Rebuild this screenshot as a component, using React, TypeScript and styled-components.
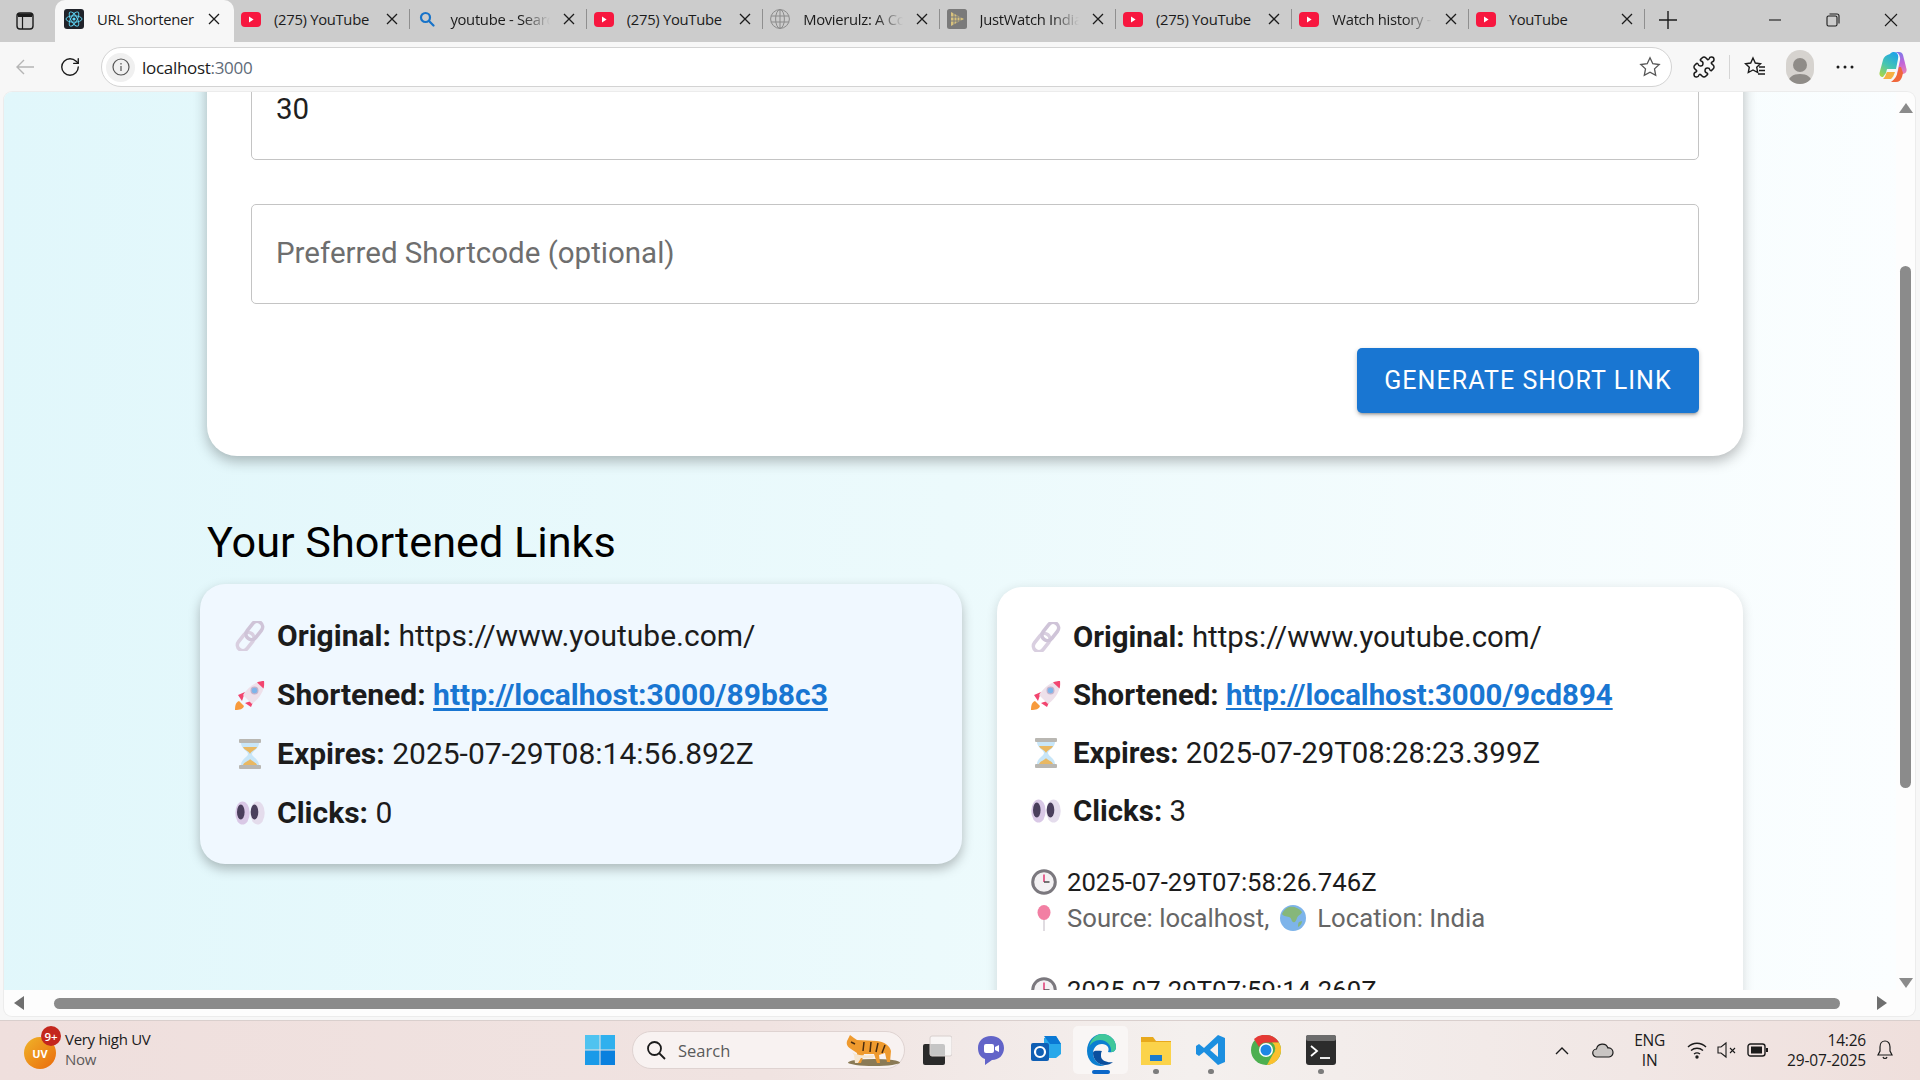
import React from "react";
import styled, { createGlobalStyle } from "styled-components";
import { Puzzle, RotateCw } from "lucide-react";

const GlobalStyle = createGlobalStyle`
  html, body {
    margin: 0;
    padding: 0;
    height: 100%;
    overflow: hidden;
    font-family: "Open Sans", "Noto Sans", sans-serif;
  }
  * { box-sizing: border-box; }
`;

const Screen = styled.div`
  width: 1920px;
  height: 1080px;
  display: flex;
  flex-direction: column;
  background: #f7f7f7;
  overflow: hidden;
`;

/* browser chrome */
const TabStrip = styled.div`
  height: 42px;
  flex: none;
  display: flex;
  background: #cccccc;
`;

const SideToggle = styled.div`
  width: 55px;
  flex: none;
  display: flex;
  align-items: center;
  padding-left: 16px;
`;

const Tab = styled.div<{ $active?: boolean }>`
  width: ${({ $active }) => ($active ? "179px" : "176.4px")};
  flex: none;
  display: flex;
  align-items: center;
  gap: 13px;
  padding: ${({ $active }) => ($active ? "0 14px 4px 9px" : "0 12px 4px 7px")};
  position: relative;
  background: ${({ $active }) => ($active ? "#f7f7f7" : "transparent")};
  border-radius: ${({ $active }) => ($active ? "10px 10px 0 0" : "0")};
  &::after {
    content: "";
    position: absolute;
    right: 0;
    top: 9px;
    height: 20px;
    width: 1px;
    background: ${({ $active }) => ($active ? "transparent" : "#8f8f8f")};
  }
`;

const TabIcon = styled.div`
  width: 20px;
  height: 20px;
  flex: none;
  display: flex;
  align-items: center;
  justify-content: center;
`;

const TabTitle = styled.div<{ $fade?: boolean }>`
  flex: 1;
  min-width: 0;
  white-space: nowrap;
  overflow: hidden;
  font-size: 14.8px;
  letter-spacing: -0.3px;
  color: #1b1b1b;
  ${({ $fade }) =>
    $fade
      ? "-webkit-mask-image: linear-gradient(90deg, #000 72%, transparent 100%);"
      : ""}
`;

const TabClose = styled.svg`
  width: 12px;
  height: 12px;
  flex: none;
`;

const NewTab = styled.svg`
  width: 18px;
  height: 18px;
  margin: 11px 0 0 14px;
`;

const WindowButtons = styled.div`
  margin-left: auto;
  display: flex;
  align-items: center;
  height: 40px;
`;

const WindowButton = styled.div`
  width: 58px;
  height: 40px;
  display: flex;
  align-items: center;
  justify-content: center;
`;

const Toolbar = styled.div`
  height: 50px;
  flex: none;
  display: flex;
  align-items: center;
  background: #f7f7f7;
  padding-left: 14px;
`;

const NavButton = styled.div`
  width: 22px;
  height: 22px;
  display: flex;
  align-items: center;
  justify-content: center;
`;

const NavGroup = styled.div`
  display: flex;
  gap: 23px;
  width: 87px;
  flex: none;
`;

const AddressBar = styled.div`
  width: 1571px;
  height: 40px;
  flex: none;
  display: flex;
  align-items: center;
  background: #fff;
  border: 1px solid #d3d3d3;
  border-radius: 20px;
  padding: 0 10px 0 4px;
`;

const InfoBadge = styled.div`
  width: 29px;
  height: 29px;
  border-radius: 50%;
  background: #f0f0f0;
  display: flex;
  align-items: center;
  justify-content: center;
  margin-right: 7px;
`;

const UrlText = styled.div`
  flex: 1;
  font-size: 17px;
  letter-spacing: -0.3px;
  color: #1b1b1b;
  span { color: #5f6b78; }
`;

const ToolGroup = styled.div`
  display: flex;
  align-items: center;
  padding-left: 11px;
`;

const ToolSlot = styled.div<{ $w: number }>`
  width: ${({ $w }) => $w}px;
  flex: none;
  display: flex;
  align-items: center;
  justify-content: center;
`;

const ToolDivider = styled.div`
  width: 1px;
  height: 24px;
  background: #d5d5d5;
`;

const Avatar = styled.div`
  width: 28px;
  height: 34px;
  border-radius: 14px;
  background: #d6d3cf;
  display: flex;
  align-items: flex-end;
  justify-content: center;
  overflow: hidden;
`;

/* page */
const Viewport = styled.div`
  flex: 1;
  min-height: 0;
  display: flex;
  flex-direction: column;
  background: #fdfdfd;
  margin: 0 5px 0 4px;
  border-radius: 8px;
  box-shadow: 0 0 0 1px #ececec;
  overflow: hidden;
`;

const PageRow = styled.div`
  flex: 1;
  min-height: 0;
  display: flex;
`;

const PageClip = styled.div`
  flex: 1;
  min-width: 0;
  overflow: hidden;
  background: linear-gradient(92deg, #e1f7fb 0%, #ecfafc 50%, #fbfeff 100%);
`;

const Page = styled.main`
  padding-left: 203px;
  margin-top: -96px;
  color: #000;
  font-family: Roboto, "Liberation Sans", sans-serif;
`;

const FormCard = styled.section`
  width: 1536px;
  background: #fff;
  border-radius: 30px;
  padding: 64px 44px 43px;
  box-shadow: 0 5px 14px rgba(0, 0, 0, 0.28);
  display: flex;
  flex-direction: column;
`;

const Field = styled.div<{ $value?: boolean }>`
  height: 100px;
  border: 1px solid #c4c4c4;
  border-radius: 5px;
  display: flex;
  align-items: center;
  padding: 0 24px 3px;
  font-size: 29.5px;
  margin-bottom: 44px;
  color: ${({ $value }) => ($value ? "#1f1f1f" : "#6e6e6e")};
`;

const SubmitRow = styled.div`
  display: flex;
  justify-content: flex-end;
`;

const SubmitButton = styled.button`
  width: 342px;
  height: 65px;
  border: 0;
  border-radius: 5px;
  background: #1976d2;
  color: #fff;
  font-family: inherit;
  font-size: 25px;
  font-weight: 400;
  letter-spacing: 1.05px;
  box-shadow: 0 3px 3px -2px rgba(0, 0, 0, 0.3), 0 2px 5px rgba(0, 0, 0, 0.22);
`;

const Heading = styled.h2`
  margin: 44px 0 0 0;
  height: 84px;
  display: flex;
  align-items: center;
  font-size: 43.2px;
  font-weight: 400;
`;

const CardGrid = styled.div`
  display: flex;
  align-items: flex-start;
  gap: 35px;
  margin-left: -7px;
`;

const LinkCard = styled.article<{ $tint?: boolean }>`
  flex: none;
  width: ${({ $tint }) => ($tint ? "762px" : "746px")};
  margin-top: ${({ $tint }) => ($tint ? "0" : "3px")};
  background: ${({ $tint }) => ($tint ? "#f0f8ff" : "#fff")};
  border-radius: 25px;
  font-size: ${({ $tint }) => ($tint ? "30px" : "29.4px")};
  padding: ${({ $tint }) => ($tint ? "22px 35px 22px" : "21px 34px 20px")};
  box-shadow: ${({ $tint }) =>
    $tint ? "0 5px 12px rgba(0, 0, 0, 0.26)" : "0 3px 12px rgba(0, 0, 0, 0.14)"};
`;

const InfoRow = styled.div<{ $tight?: boolean }>`
  height: ${({ $tight }) => ($tight ? "58px" : "59px")};
  display: flex;
  align-items: center;
  color: #1c1c1c;
  white-space: pre;
  b { font-weight: 700; }
`;

const RowIcon = styled.svg`
  width: 30px;
  height: 30px;
  flex: none;
  margin-right: 12px;
`;

const ShortLink = styled.a`
  color: #1976d2;
  font-weight: 700;
  text-decoration: underline;
  text-underline-offset: 3px;
`;

const VisitList = styled.div`
  margin-top: 24px;
  display: flex;
  flex-direction: column;
  gap: 36px;
`;

const Visit = styled.div`
  display: flex;
  flex-direction: column;
`;

const VisitLine = styled.div<{ $muted?: boolean }>`
  height: 36px;
  display: flex;
  align-items: center;
  font-size: 25.7px;
  white-space: pre;
  color: ${({ $muted }) => ($muted ? "#666" : "#1c1c1c")};
`;

const VisitIcon = styled.svg<{ $inline?: boolean }>`
  width: 26px;
  height: 26px;
  flex: none;
  margin: ${({ $inline }) => ($inline ? "0 11px" : "0 10px 0 0")};
`;

const VTrack = styled.div`
  width: 19px;
  flex: none;
  display: flex;
  flex-direction: column;
  align-items: center;
  padding: 11px 0 2px;
`;

const VThumb = styled.div`
  width: 11px;
  height: 522px;
  border-radius: 6px;
  background: #8b8b8b;
  margin: 153px 0 auto;
`;

const HTrack = styled.div`
  height: 26px;
  flex: none;
  display: flex;
  align-items: center;
  padding: 0 28px 0 10px;
`;

const HThumb = styled.div`
  flex: 1;
  height: 11px;
  margin: 0 37px 0 30px;
  border-radius: 6px;
  background: #8b8b8b;
`;

/* taskbar */
const Taskbar = styled.footer`
  height: 60px;
  flex: none;
  margin-top: 4px;
  border-top: 1px solid #d9cfcd;
  padding-bottom: 1px;
  background: linear-gradient(90deg, #efdfdd 0%, #f0e3e1 40%, #f4f0ee 62%, #f1e7e5 85%, #efdfdc 100%);
  display: flex;
  align-items: center;
`;

const Widget = styled.div`
  width: 585px;
  flex: none;
  display: flex;
  align-items: center;
  padding-left: 24px;
`;

const UvIcon = styled.div`
  width: 32px;
  height: 32px;
  margin-top: 6px;
  border-radius: 50%;
  background: linear-gradient(135deg, #f0b429, #ea6a0c);
  color: #fff;
  font: 700 11px "Open Sans", sans-serif;
  display: flex;
  align-items: center;
  justify-content: center;
  position: relative;
`;

const CountBadge = styled.div`
  position: absolute;
  top: -11px;
  right: -5px;
  width: 20px;
  height: 20px;
  border-radius: 50%;
  background: #c4261d;
  font-size: 11.5px;
  font-weight: 600;
  display: flex;
  align-items: center;
  justify-content: center;
`;

const WidgetText = styled.div`
  margin: 0 0 2px 9px;
  font-size: 15px;
  letter-spacing: -0.3px;
  line-height: 20px;
  color: #1b1b1b;
  small { display: block; font-size: 15px; color: #5d5a5a; }
`;

const WinLogo = styled.svg`
  width: 30px;
  height: 30px;
  flex: none;
`;

const SearchBox = styled.div`
  width: 273px;
  height: 38px;
  flex: none;
  margin-left: 17px;
  border-radius: 19px;
  background: #f8f2f1;
  border: 1px solid #dfd3d1;
  display: flex;
  align-items: center;
  padding: 0 4px 0 13px;
  font-size: 16.5px;
  color: #5a5a5a;
  gap: 12px;
  svg:last-child { margin-left: auto; }
`;

const AppIcons = styled.div`
  display: flex;
  margin-left: 3px;
`;

const AppSlot = styled.div<{ $active?: boolean; $dot?: boolean }>`
  width: 55px;
  height: 48px;
  display: flex;
  align-items: center;
  justify-content: center;
  position: relative;
  border-radius: 5px;
  background: ${({ $active }) => ($active ? "#f9f6f5" : "transparent")};
  &::after {
    content: "";
    display: ${({ $active, $dot }) => ($active || $dot ? "block" : "none")};
    position: absolute;
    bottom: 0;
    left: 50%;
    transform: translateX(-50%);
    width: ${({ $active }) => ($active ? "18px" : "6px")};
    height: ${({ $active }) => ($active ? "4px" : "5px")};
    border-radius: 3px;
    background: ${({ $active }) => ($active ? "#0a66c8" : "#7c7c7c")};
  }
`;

const Tray = styled.div`
  margin-left: auto;
  display: flex;
  align-items: center;
  padding-right: 26px;
`;

const TrayIcon = styled.svg<{ $gap?: number }>`
  flex: none;
  margin-left: ${({ $gap }) => $gap ?? 0}px;
`;

const TrayLang = styled.div`
  margin: 0 22px 0 20px;
  font-size: 15.5px;
  line-height: 20px;
  text-align: center;
  letter-spacing: -0.2px;
  color: #1b1b1b;
`;

const TrayClock = styled.div`
  margin: 0 10px 0 19px;
  font-size: 15.5px;
  line-height: 20px;
  text-align: right;
  letter-spacing: -0.2px;
  color: #1b1b1b;
`;

/* icons */
const YouTubeIcon = () => (
  <svg width="20" height="15" viewBox="0 0 20 15">
    <rect width="20" height="15" rx="4" fill="#f7173f" />
    <path d="M8 4.6l4.6 2.9L8 10.4z" fill="#fff" />
  </svg>
);

const ReactIcon = () => (
  <svg width="20" height="20" viewBox="0 0 20 20">
    <rect width="20" height="20" rx="3" fill="#20232a" />
    <g fill="none" stroke="#61dafb" strokeWidth="0.9">
      <ellipse cx="10" cy="10" rx="8" ry="3.2" />
      <ellipse cx="10" cy="10" rx="8" ry="3.2" transform="rotate(60 10 10)" />
      <ellipse cx="10" cy="10" rx="8" ry="3.2" transform="rotate(120 10 10)" />
    </g>
    <circle cx="10" cy="10" r="1.6" fill="#61dafb" />
  </svg>
);

const SearchTabIcon = () => (
  <svg width="16" height="16" viewBox="0 0 16 16" fill="none" stroke="#1773c9" strokeWidth="2.2">
    <circle cx="6.5" cy="6.5" r="4.5" />
    <path d="M10 10l4.5 4.5" strokeLinecap="round" />
  </svg>
);

const GlobeIcon = () => (
  <svg width="20" height="20" viewBox="0 0 20 20" fill="none" stroke="#8a8a8a" strokeWidth="1">
    <circle cx="10" cy="10" r="9.4" />
    <ellipse cx="10" cy="10" rx="4.4" ry="9.4" />
    <path d="M1 7h18M1 13h18M10 .6v18.8" />
  </svg>
);

const JustWatchIcon = () => (
  <svg width="20" height="20" viewBox="0 0 20 20">
    <rect width="20" height="20" rx="2.5" fill="#7a7a7a" />
    <path d="M4 3l13 7-13 7z" fill="#d8c27d" />
    <path d="M7 3v14M10 3v14M13 3v14M4 8h12M4 12h12" stroke="#7a7a7a" strokeWidth="1" />
  </svg>
);

const CloseGlyph = () => (
  <TabClose viewBox="0 0 12 12" fill="none" stroke="#1b1b1b" strokeWidth="1.3">
    <path d="M1 1l10 10M11 1L1 11" />
  </TabClose>
);

const LinkEmoji = () => (
  <RowIcon viewBox="0 0 30 30" fill="none">
    <g transform="rotate(-52 15 15)" strokeWidth="3.6" stroke="#d9cfe0">
      <rect x="-2" y="9.500" width="20" height="11" rx="5.500" />
      <rect x="12" y="9.500" width="20" height="11" rx="5.500" stroke="#cfc4d8" />
    </g>
  </RowIcon>
);

const RocketEmoji = () => (
  <RowIcon viewBox="0 0 30 30">
    <path d="M0 30c0-5 1-8 4-9l5 5c-1 3-4 4-9 4z" fill="#f79a3c" />
    <path d="M3 15l7-3-3 9zM16 27l3-7-9 3z" fill="#f2456f" />
    <path d="M29 1c1 9-4 17-12 23l-9-9C13 7 21 1 29 1z" fill="#eee0ea" />
    <path d="M29 1c.3 2.500.2 5-.5 7.500L22 2.500C24 1.500 27 1 29 1z" fill="#f2456f" />
    <circle cx="19.500" cy="10.500" r="3.400" fill="#7fb5ea" stroke="#c4b3cc" strokeWidth="1.200" />
  </RowIcon>
);

const HourglassEmoji = () => (
  <RowIcon viewBox="0 0 30 30">
    <rect x="4" y="0" width="22" height="4" rx="1" fill="#b9b7b2" />
    <rect x="4" y="26" width="22" height="4" rx="1" fill="#b9b7b2" />
    <path d="M6 4h18c0 6-7 8-7 11s7 5 7 11H6c0-6 7-8 7-11S6 10 6 4z" fill="#c8e6f8" />
    <path d="M8 8h14c-1 3-6 4-7 7-1-3-6-4-7-7z" fill="#e9b862" />
    <path d="M8 26c1-3 6-4 7-6 1 2 6 3 7 6z" fill="#e9b862" />
  </RowIcon>
);

const EyesEmoji = () => (
  <RowIcon viewBox="0 0 30 30">
    <ellipse cx="7.500" cy="15" rx="7.200" ry="11.500" fill="#d9c8e6" />
    <ellipse cx="22.500" cy="15" rx="7.200" ry="11.500" fill="#e4dcec" />
    <ellipse cx="5.800" cy="14" rx="3.800" ry="7.500" fill="#4a3f5c" />
    <ellipse cx="19.500" cy="14" rx="3.800" ry="7.500" fill="#4a3f5c" />
  </RowIcon>
);

const ClockEmoji = () => (
  <VisitIcon viewBox="0 0 26 26">
    <circle cx="13" cy="13" r="11.300" fill="#f3f1f3" stroke="#7b787e" strokeWidth="3" />
    <path d="M13 5.500V13" stroke="#e0447a" strokeWidth="1.600" />
    <path d="M13 13h5.500" stroke="#555" strokeWidth="1.600" />
  </VisitIcon>
);

const PinEmoji = () => (
  <VisitIcon viewBox="0 0 26 26">
    <path d="M13 13v13" stroke="#d9d4da" strokeWidth="1.600" />
    <ellipse cx="13" cy="7.500" rx="6.500" ry="7.500" fill="#f27fa3" />
  </VisitIcon>
);

const EarthEmoji = () => (
  <VisitIcon $inline viewBox="0 0 26 26">
    <circle cx="13" cy="13" r="13" fill="#7db4ea" />
    <path d="M9 2c5-1 10 1 13 5-1 3-4 3-5 6s-2 5-4 4-1-4-4-5-6-1-7-3c1-3 4-6 7-7zM19 17l3-1c0 3-2 5-4 6 0-2 0-4 1-5z" fill="#86b77a" />
  </VisitIcon>
);

const tabs: { title: string; icon: React.ReactNode; fade?: boolean }[] = [
  { title: "(275) YouTube", icon: <YouTubeIcon /> },
  { title: "youtube - Search", icon: <SearchTabIcon />, fade: true },
  { title: "(275) YouTube", icon: <YouTubeIcon /> },
  { title: "Movierulz: A Complete", icon: <GlobeIcon />, fade: true },
  { title: "JustWatch India", icon: <JustWatchIcon />, fade: true },
  { title: "(275) YouTube", icon: <YouTubeIcon /> },
  { title: "Watch history - YouTube", icon: <YouTubeIcon />, fade: true },
  { title: "YouTube", icon: <YouTubeIcon /> },
];

const visits = ["2025-07-29T07:58:26.746Z", "2025-07-29T07:59:14.260Z"];

export default function App() {
  return (
    <Screen>
      <GlobalStyle />
      <TabStrip>
        <SideToggle>
          <svg width="18" height="18" viewBox="0 0 18 18" fill="none">
            <rect x="1" y="1" width="16" height="16" rx="3" stroke="#1b1b1b" strokeWidth="1.4" />
            <path d="M2 1.500h14V5H2z" fill="#1b1b1b" />
            <path d="M6.500 5v12" stroke="#1b1b1b" strokeWidth="1.200" />
          </svg>
        </SideToggle>
        <Tab $active>
          <TabIcon><ReactIcon /></TabIcon>
          <TabTitle>URL Shortener</TabTitle>
          <CloseGlyph />
        </Tab>
        {tabs.map((t, i) => (
          <Tab key={i}>
            <TabIcon>{t.icon}</TabIcon>
            <TabTitle $fade={t.fade}>{t.title}</TabTitle>
            <CloseGlyph />
          </Tab>
        ))}
        <NewTab viewBox="0 0 18 18" stroke="#1b1b1b" strokeWidth="1.4">
          <path d="M9 0v18M0 9h18" />
        </NewTab>
        <WindowButtons>
          <WindowButton>
            <svg width="14" height="14" viewBox="0 0 14 14" stroke="#1b1b1b" strokeWidth="1.100"><path d="M1 7h12" /></svg>
          </WindowButton>
          <WindowButton>
            <svg width="14" height="14" viewBox="0 0 14 14" fill="none" stroke="#1b1b1b" strokeWidth="1.100">
              <rect x="1" y="3" width="10" height="10" rx="1.500" />
              <path d="M3.500 1H11a2 2 0 0 1 2 2v7.500" />
            </svg>
          </WindowButton>
          <WindowButton>
            <svg width="14" height="14" viewBox="0 0 14 14" stroke="#1b1b1b" strokeWidth="1.100"><path d="M1 1l12 12M13 1L1 13" /></svg>
          </WindowButton>
        </WindowButtons>
      </TabStrip>

      <Toolbar>
        <NavGroup>
          <NavButton>
            <svg width="20" height="20" viewBox="0 0 20 20" fill="none" stroke="#b5b5b5" strokeWidth="1.400">
              <path d="M19 10H2M9 3l-7 7 7 7" />
            </svg>
          </NavButton>
          <NavButton>
            <RotateCw size={22} strokeWidth={1.5} color="#1b1b1b" />
          </NavButton>
        </NavGroup>
        <AddressBar>
          <InfoBadge>
            <svg width="18" height="18" viewBox="0 0 18 18" fill="none" stroke="#555" strokeWidth="1.200">
              <circle cx="9" cy="9" r="8" />
              <path d="M9 8v5M9 5v1.400" />
            </svg>
          </InfoBadge>
          <UrlText>localhost<span>:3000</span></UrlText>
          <svg width="22" height="22" viewBox="0 0 22 22" fill="none" stroke="#555" strokeWidth="1.300">
            <path d="M11 1.800l2.800 5.900 6.400.8-4.700 4.400 1.200 6.400-5.700-3.100-5.700 3.100 1.200-6.400L1.800 8.500l6.400-.8z" />
          </svg>
        </AddressBar>
        <ToolGroup>
          <ToolSlot $w={42}>
            <Puzzle size={24} strokeWidth={1.5} color="#1b1b1b" />
          </ToolSlot>
          <ToolSlot $w={8}><ToolDivider /></ToolSlot>
          <ToolSlot $w={44}>
            <svg width="22" height="22" viewBox="0 0 22 22" fill="none" stroke="#1b1b1b" strokeWidth="1.400">
              <path d="M9 2l2.300 5 5.200.7-3.800 3.500 1 5.300L9 14l-4.700 2.500 1-5.300L1.500 7.700 6.700 7z" />
              <path d="M15 11h6M15 14.500h6M14 18h7" />
            </svg>
          </ToolSlot>
          <ToolSlot $w={46}>
            <Avatar>
              <svg width="24" height="30" viewBox="0 0 24 30" fill="#8f8c88">
                <circle cx="12" cy="11" r="7" />
                <path d="M0 30c0-7 5-10 12-10s12 3 12 10z" />
              </svg>
            </Avatar>
          </ToolSlot>
          <ToolSlot $w={44}>
            <svg width="18" height="4" viewBox="0 0 18 4" fill="#1b1b1b">
              <circle cx="2" cy="2" r="1.500" /><circle cx="9" cy="2" r="1.500" /><circle cx="16" cy="2" r="1.500" />
            </svg>
          </ToolSlot>
          <ToolSlot $w={52}>
            <svg width="28" height="32" viewBox="0 0 28 32">
              <defs>
                <linearGradient id="cpLeft" x1="0.700" y1="0" x2="0.200" y2="1">
                  <stop offset="0" stopColor="#1fa5e6" />
                  <stop offset="0.550" stopColor="#47c6b0" />
                  <stop offset="1" stopColor="#a6d64a" />
                </linearGradient>
                <linearGradient id="cpRight" x1="0.500" y1="0" x2="0.600" y2="1">
                  <stop offset="0" stopColor="#7c7bea" />
                  <stop offset="0.500" stopColor="#c163d8" />
                  <stop offset="1" stopColor="#e884b8" />
                </linearGradient>
              </defs>
              <path d="M15 1h5c2 0 3.500 1 4 3l3.500 14c.6 2.500-1 5-3.500 5h-6l3-14c.6-3-1-8-6-8z" fill="url(#cpRight)" />
              <path d="M11 3c1-1.500 2.500-2 4-2 3 0 5 3 4 7L17 18H8l-1 4-3 4H4c-2.500 0-4-2-3.400-4.500L4 9c.7-3 3-5 7-6z" fill="url(#cpLeft)" />
              <path d="M20 16l-1 4c-1 4-2.500 8-7 11h5c3 0 5-2 6-5l1-4-2-6z" fill="#f0673b" />
              <path d="M8 21l-1 2c-1 3-2 4-3 5h8c2-2 3-4 4-7z" fill="#f6b042" />
            </svg>
          </ToolSlot>
        </ToolGroup>
      </Toolbar>

      <Viewport>
        <PageRow>
          <PageClip>
            <Page>
              <FormCard>
                <Field $value>30</Field>
                <Field>Preferred Shortcode (optional)</Field>
                <SubmitRow>
                  <SubmitButton>GENERATE SHORT LINK</SubmitButton>
                </SubmitRow>
              </FormCard>
              <Heading>Your Shortened Links</Heading>
              <CardGrid>
                <LinkCard $tint>
                  <InfoRow><LinkEmoji /><span><b>Original:</b> https://www.youtube.com/</span></InfoRow>
                  <InfoRow><RocketEmoji /><span><b>Shortened:</b> <ShortLink href="#a">http://localhost:3000/89b8c3</ShortLink></span></InfoRow>
                  <InfoRow><HourglassEmoji /><span><b>Expires:</b> 2025-07-29T08:14:56.892Z</span></InfoRow>
                  <InfoRow><EyesEmoji /><span><b>Clicks:</b> 0</span></InfoRow>
                </LinkCard>
                <LinkCard>
                  <InfoRow $tight><LinkEmoji /><span><b>Original:</b> https://www.youtube.com/</span></InfoRow>
                  <InfoRow $tight><RocketEmoji /><span><b>Shortened:</b> <ShortLink href="#b">http://localhost:3000/9cd894</ShortLink></span></InfoRow>
                  <InfoRow $tight><HourglassEmoji /><span><b>Expires:</b> 2025-07-29T08:28:23.399Z</span></InfoRow>
                  <InfoRow $tight><EyesEmoji /><span><b>Clicks:</b> 3</span></InfoRow>
                  <VisitList>
                    {visits.map((v) => (
                      <Visit key={v}>
                        <VisitLine><ClockEmoji />{v}</VisitLine>
                        <VisitLine $muted><PinEmoji />Source: localhost,<EarthEmoji />Location: India</VisitLine>
                      </Visit>
                    ))}
                  </VisitList>
                </LinkCard>
              </CardGrid>
            </Page>
          </PageClip>
          <VTrack>
            <svg width="14" height="10" viewBox="0 0 14 10" fill="#8b8b8b"><path d="M7 0l7 10H0z" /></svg>
            <VThumb />
            <svg width="14" height="10" viewBox="0 0 14 10" fill="#8b8b8b"><path d="M7 10L14 0H0z" /></svg>
          </VTrack>
        </PageRow>
        <HTrack>
          <svg width="10" height="14" viewBox="0 0 10 14" fill="#6f6f6f"><path d="M0 7l10-7v14z" /></svg>
          <HThumb />
          <svg width="10" height="14" viewBox="0 0 10 14" fill="#6f6f6f"><path d="M10 7L0 0v14z" /></svg>
        </HTrack>
      </Viewport>

      <Taskbar>
        <Widget>
          <UvIcon>
            UV
            <CountBadge>9+</CountBadge>
          </UvIcon>
          <WidgetText>Very high UV<small>Now</small></WidgetText>
        </Widget>
        <WinLogo viewBox="0 0 30 30">
          <rect width="14.500" height="14.500" fill="#4fc3f0" />
          <rect x="15.500" width="14.500" height="14.500" fill="#2fb0ee" />
          <rect y="15.500" width="14.500" height="14.500" fill="#1a9ae8" />
          <rect x="15.500" y="15.500" width="14.500" height="14.500" fill="#0a80de" />
        </WinLogo>
        <SearchBox>
          <svg width="20" height="20" viewBox="0 0 20 20" fill="none" stroke="#1b1b1b" strokeWidth="1.800">
            <circle cx="8.500" cy="8.500" r="6.500" /><path d="M13 13l6 6" />
          </svg>
          Search
          <svg width="56" height="32" viewBox="0 0 56 32">
            <ellipse cx="30" cy="28.500" rx="26" ry="3.500" fill="#8a7a55" />
            <path d="M3 7l3-6 4 3 3 2 20 1c8 1 13 5 14 10l-1 11h-3l-2-9-6 2 1 8h-3l-3-9-10 0-3 9h-3l-1-10-6-4c-3-2-5-4-4-8z" fill="#ef9a2e" />
            <path d="M8 18c3 3 12 4 22 3l-1 3-12 0-3 5h-3l-1-8z" fill="#f6e6cf" />
            <path d="M20 8l-1 9M27 8l-1 10M34 9l-2 9M41 11l-3 8M7 8l4 2" fill="none" stroke="#4a2c10" strokeWidth="1.500" />
          </svg>
        </SearchBox>
        <AppIcons>
          <AppSlot>
            <svg width="32" height="32" viewBox="0 0 32 32">
              <rect x="3" y="10" width="22" height="21" rx="2" fill="#2a2a2a" />
              <rect x="10" y="2" width="22" height="20" rx="2" fill="#fafafa" fillOpacity="0.750" stroke="#d8d0ce" />
            </svg>
          </AppSlot>
          <AppSlot>
            <svg width="30" height="32" viewBox="0 0 30 32">
              <path d="M15 2c8 0 13 5 13 12s-5 12-12 12l-7 5v-6C4 23 2 19 2 14 2 7 7 2 15 2z" fill="#6264c8" />
              <rect x="8" y="10" width="10" height="9" rx="2" fill="#fff" />
              <path d="M19 13l4-2v7l-4-2z" fill="#fff" />
            </svg>
          </AppSlot>
          <AppSlot>
            <svg width="32" height="32" viewBox="0 0 32 32">
              <path d="M14 4l12-2 5 8v10l-5 4H14z" fill="#28a8ea" />
              <path d="M14 2h12l5 8H20z" fill="#0a78d4" />
              <rect x="1" y="9" width="18" height="18" rx="2" fill="#0f5fb4" />
              <circle cx="10" cy="18" r="5" fill="none" stroke="#fff" strokeWidth="2.200" />
            </svg>
          </AppSlot>
          <AppSlot $active>
            <svg width="32" height="34" viewBox="0 0 32 34">
              <path d="M2 18C2 8 9 1 17 1c8 0 14 6 14 13 0 5-5 6-8 5 2-4-1-8-6-8-6 0-9 5-9 9 0 6 5 12 12 12-4 2-9 1-13-2-3-3-5-7-5-12z" fill="#0c7fd0" />
              <path d="M17 1c8 0 14 6 14 13 0 3-2 5-5 5 1-6-4-12-11-12-5 0-9 3-11 7 2-8 7-13 13-13z" fill="#40c79a" />
              <path d="M8 20c0 6 5 12 12 12 3 0 6-1 8-3-5 1-12-1-12-6 0-2 0-4 1-5-4 0-9-1-9 2z" fill="#0a4f9e" />
            </svg>
          </AppSlot>
          <AppSlot $dot>
            <svg width="30" height="30" viewBox="0 0 30 30">
              <path d="M0 2h12l3 4H30v24H0z" fill="#e8a91c" />
              <rect y="7" width="30" height="23" fill="#fbd34a" />
              <rect x="9" y="20" width="12" height="6" fill="#1a7bd0" />
            </svg>
          </AppSlot>
          <AppSlot $dot>
            <svg width="30" height="32" viewBox="0 0 30 32">
              <path d="M22 1l7 3v24l-7 3-14-13-5 4-3-2v-8l3-2 5 4z" fill="#1c8fe0" />
              <path d="M22 9l-8 7 8 7z" fill="#f6f0ee" />
            </svg>
          </AppSlot>
          <AppSlot>
            <svg width="30" height="30" viewBox="0 0 30 30">
              <circle cx="15" cy="15" r="15" fill="#4caf50" />
              <path d="M15 0a15 15 0 0 1 13 7.500H15A7.500 7.500 0 0 0 8 12L3 4A15 15 0 0 1 15 0z" fill="#e53935" />
              <path d="M28 7.500A15 15 0 0 1 16 30l6-11a7.500 7.500 0 0 0-1-11.500z" fill="#fbc02d" />
              <circle cx="15" cy="15" r="7" fill="#fff" />
              <circle cx="15" cy="15" r="5.500" fill="#1e88e5" />
            </svg>
          </AppSlot>
          <AppSlot $dot>
            <svg width="30" height="30" viewBox="0 0 30 30">
              <rect width="30" height="30" rx="3" fill="#2c2c2c" />
              <rect width="30" height="6" rx="2" fill="#6c6c6c" />
              <path d="M5 11l6 5-6 5" fill="none" stroke="#fff" strokeWidth="1.800" />
              <path d="M14 23h10" stroke="#fff" strokeWidth="1.800" />
            </svg>
          </AppSlot>
        </AppIcons>
        <Tray>
          <TrayIcon width="14" height="9" viewBox="0 0 14 9" fill="none" stroke="#1b1b1b" strokeWidth="1.400"><path d="M1 8l6-6 6 6" /></TrayIcon>
          <TrayIcon $gap={23} width="22" height="18" viewBox="0 0 22 18" fill="#c9c5c3" stroke="#1b1b1b" strokeWidth="1.200">
            <path d="M5 16a4 4 0 0 1-.5-8 6 6 0 0 1 11.500-1 4.500 4.500 0 0 1 1 9z" />
          </TrayIcon>
          <TrayLang>ENG<br />IN</TrayLang>
          <TrayIcon width="20" height="18" viewBox="0 0 20 18" fill="none" stroke="#1b1b1b" strokeWidth="1.400">
            <path d="M1 6c5-5 13-5 18 0M4 9.500c3.500-3 8.500-3 12 0M7 13c2-1.500 4-1.500 6 0" />
            <circle cx="10" cy="16" r="1" fill="#1b1b1b" />
          </TrayIcon>
          <TrayIcon $gap={10} width="20" height="18" viewBox="0 0 20 18" fill="none" stroke="#1b1b1b" strokeWidth="1.100">
            <path d="M1 6v6h3l5 4V2L4 6zM13 7l5 5M18 7l-5 5" />
          </TrayIcon>
          <TrayIcon $gap={10} width="21" height="14" viewBox="0 0 21 14">
            <rect x="1" y="1" width="17" height="12" rx="2.500" fill="none" stroke="#1b1b1b" strokeWidth="1.400" />
            <rect x="4" y="3.500" width="11" height="7" fill="#1b1b1b" />
            <rect x="19" y="5" width="2" height="4" fill="#1b1b1b" />
          </TrayIcon>
          <TrayClock>14:26<br />29-07-2025</TrayClock>
          <TrayIcon width="18" height="20" viewBox="0 0 18 20" fill="none" stroke="#1b1b1b" strokeWidth="1.200">
            <path d="M9 1c-3 0-5 2.500-5 6v4l-2 4h14l-2-4V7c0-3.500-2-6-5-6zM7 17c.5 2 3.500 2 4 0" />
          </TrayIcon>
        </Tray>
      </Taskbar>
    </Screen>
  );
}
